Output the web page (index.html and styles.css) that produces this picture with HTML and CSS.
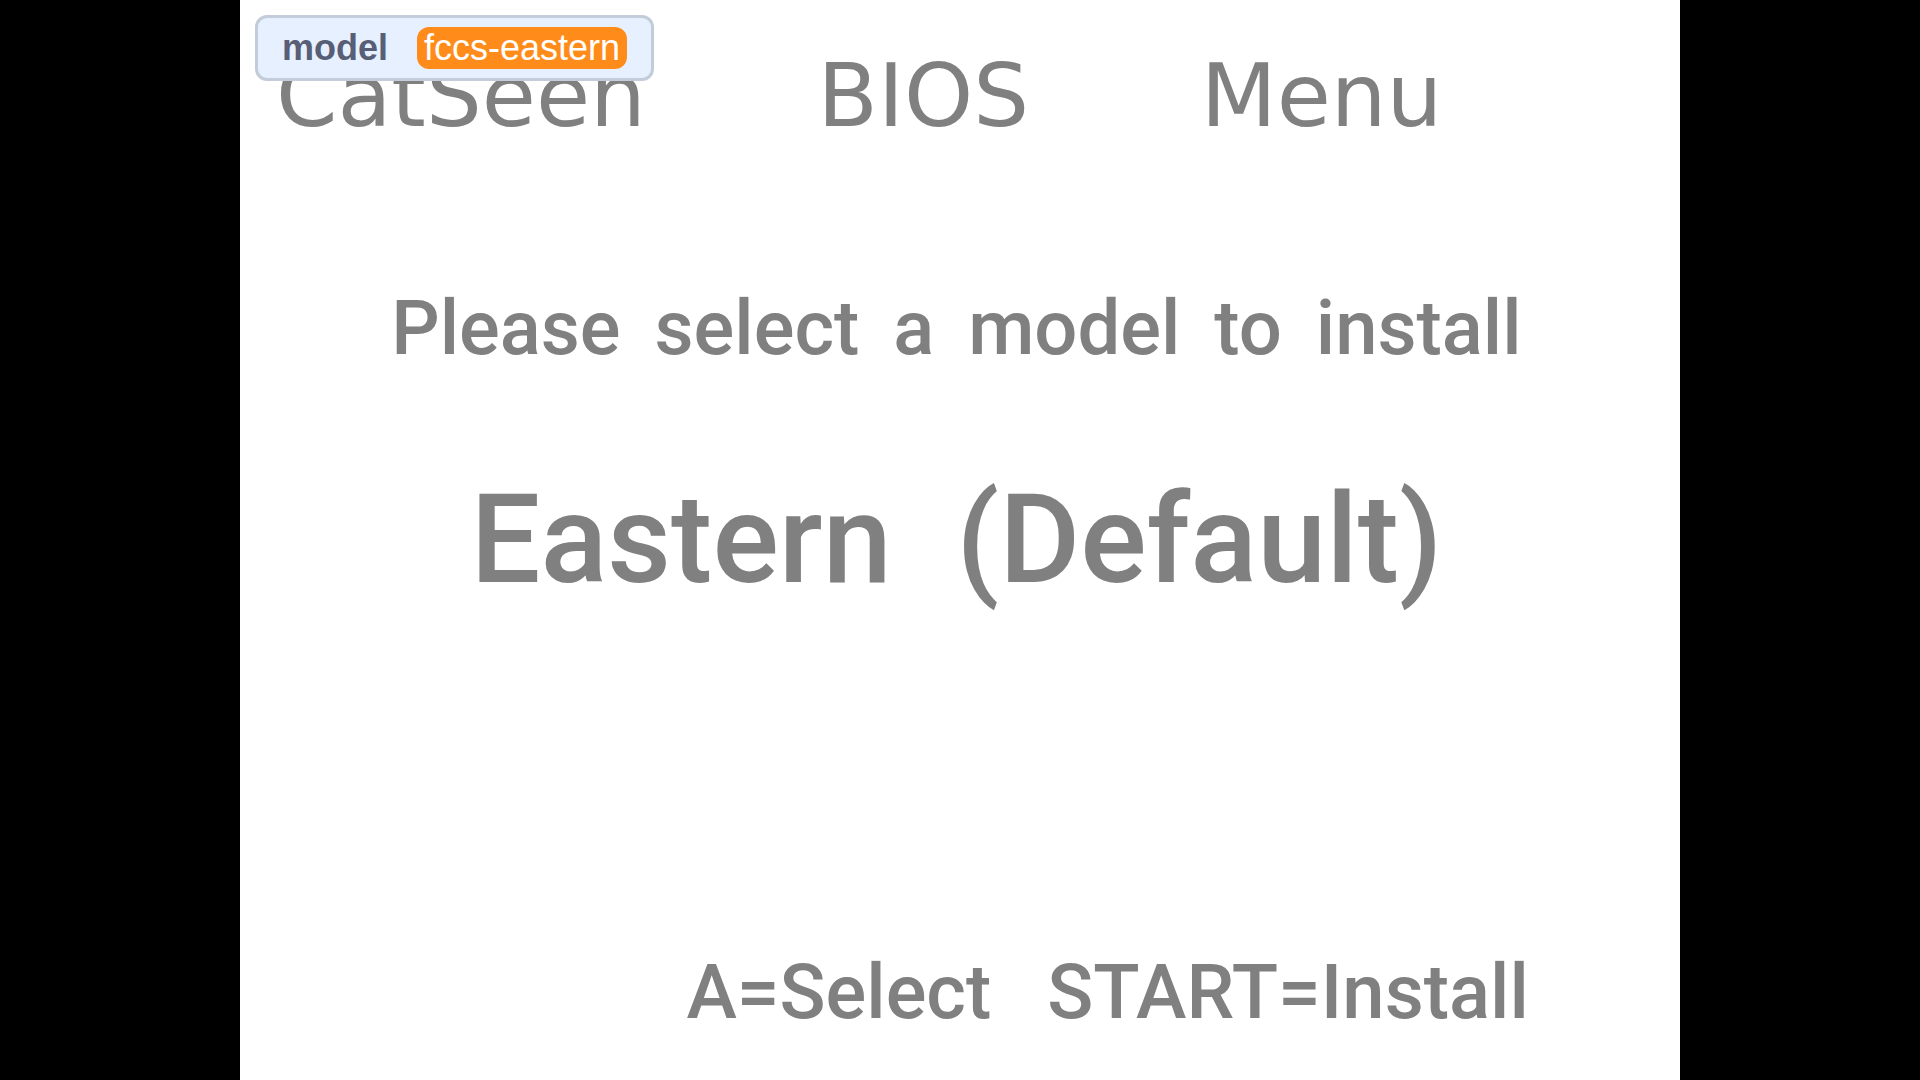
FILE: index.html
```
<!DOCTYPE html>
<html lang="en">
<head>
  <meta charset="utf-8">
  <meta name="viewport" content="width=device-width, initial-scale=1.0">
  <title>CatSeen BIOS Menu</title>
  <link rel="stylesheet" href="styles.css">
</head>
<body>
  <main class="stage">
    <div class="monitor">
      <span class="monitor-label">model</span>
      <span class="monitor-value">fccs-eastern</span>
    </div>

    <h1 class="title">CatSeen BIOS Menu</h1>
    <p class="prompt">Please select a model to install</p>
    <p class="model-name">Eastern (Default)</p>
    <p class="controls">A=Select START=Install</p>
  </main>
</body>
</html>
```
FILE: styles.css
```
body {
  margin: 0;
  background-color: #000;
  font-family: Roboto, "Liberation Sans", sans-serif;
}

/* 4:3 stage, black bars on both sides */
.stage {
  position: relative;
  display: flex;
  flex-direction: column;
  box-sizing: border-box;
  width: 100%;
  max-width: 133.33vh;
  min-height: 100vh;
  margin: 0 auto;
  padding: 48px 0 40px;
  background-color: #fff;
  color: #808080;
}

/* each line spreads its words over its own width */
.title,
.prompt,
.model-name,
.controls {
  margin: 0;
  font-weight: 500;
  line-height: 96px;
  text-align-last: justify;
}
.title {
  padding: 0 16.5% 0 2.5%;
  font-family: "DejaVu Sans", sans-serif;
  font-size: 88px;
  font-weight: 400;
}
.prompt {
  margin-top: 136px;
  padding: 0 11% 0 10.5%;
  font-size: 76px;
}
.model-name {
  margin-top: 92px;
  padding: 0 16.5% 0 16%;
  font-size: 124px;
  line-height: 144px;
}
.controls {
  margin-top: auto;
  padding: 0 10.5% 0 31%;
  font-size: 76px;
}

/* Variable monitor */
.monitor {
  position: absolute;
  top: 15px;
  left: 15px;
  display: flex;
  align-items: center;
  gap: 29px;
  padding: 9px 24px;
  border: 3px solid #c3ccd9;
  border-radius: 12px;
  background-color: #e6f0ff;
  font-family: "Liberation Sans", Arial, sans-serif;
  font-size: 36px;
  line-height: 42px;
}
.monitor-label {
  color: #575e75;
  font-weight: bold;
}
.monitor-value {
  padding: 0 7px;
  border-radius: 12px;
  background-color: #ff8c1a;
  color: #fff;
}
```
